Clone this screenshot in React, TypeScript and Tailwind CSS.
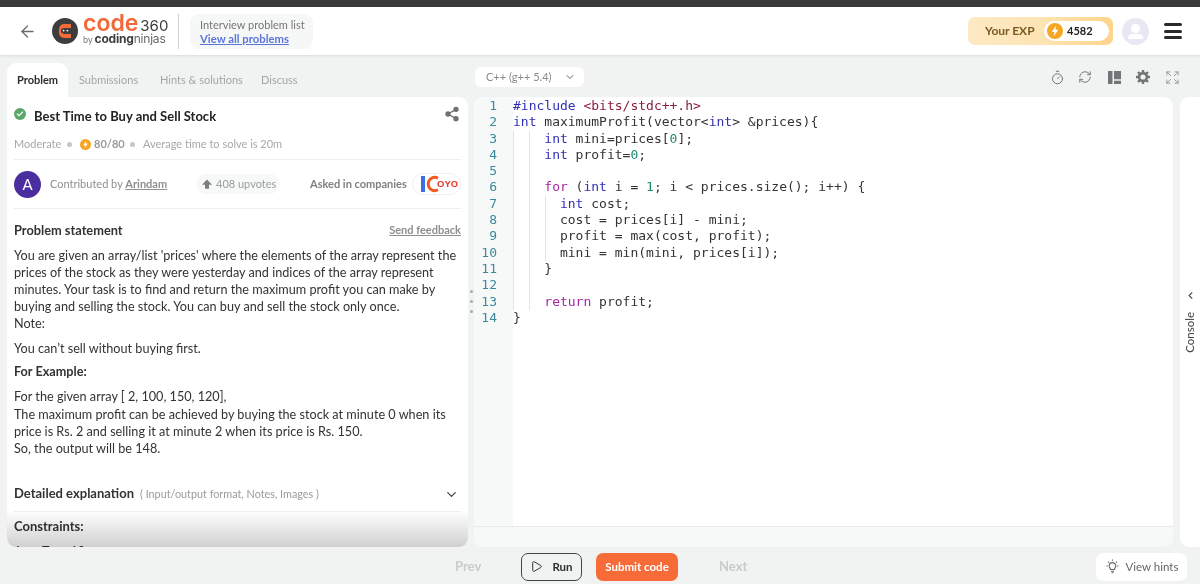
import React from "react";
import { ArrowLeft, ChevronDown, ChevronLeft, Timer, RefreshCw, Expand, Play, Share2, Check } from "lucide-react";

const Bolt = ({ size, bg = "#f5a623" }: { size: number; bg?: string }) => (
  <svg width={size} height={size} viewBox="0 0 24 24" className="shrink-0">
    <circle cx="12" cy="12" r="12" fill={bg} />
    <path d="M13.5 4 7 13.5h4.2L10 20l7-10h-4.4z" fill="#fff" />
  </svg>
);

const K = ({ c, children }: { c: string; children: React.ReactNode }) => <span className={c}>{children}</span>;
const kw = "text-[#2f2fb5]";
const pur = "text-[#a626a4]";
const num = "text-[#1f8a70]";
const str = "text-[#8a1f3c]";

const code: React.ReactNode[] = [
  <><K c={kw}>#include</K> <K c={str}>&lt;bits/stdc++.h&gt;</K></>,
  <><K c={kw}>int</K> maximumProfit(vector&lt;<K c={kw}>int</K>&gt; &amp;prices){"{"}</>,
  <>{"    "}<K c={kw}>int</K> mini=prices[<K c={num}>0</K>];</>,
  <>{"    "}<K c={kw}>int</K> profit=<K c={num}>0</K>;</>,
  <></>,
  <>{"    "}<K c={pur}>for</K> (<K c={kw}>int</K> i = <K c={num}>1</K>; i &lt; prices.size(); i++) {"{"}</>,
  <>{"      "}<K c={kw}>int</K> cost;</>,
  <>{"      "}cost = prices[i] - mini;</>,
  <>{"      "}profit = max(cost, profit);</>,
  <>{"      "}mini = min(mini, prices[i]);</>,
  <>{"    }"}</>,
  <></>,
  <>{"    "}<K c={pur}>return</K> profit;</>,
  <>{"}"}</>,
];

const Dot = () => <span className="block w-[5px] h-[5px] rounded-full bg-[#c4c6c8] shrink-0" />;

export default function App() {
  return (
    <div className="w-[1200px] h-[584px] overflow-hidden flex flex-col bg-[#f1f3f3] text-[#2d2d2d] font-['Lato','Liberation_Sans',sans-serif]">
      <div className="h-[7px] shrink-0 bg-[#3a3a3a]" />
      <header className="relative h-[48px] shrink-0 bg-white flex items-center shadow-[0_1px_3px_rgba(0,0,0,0.10)]">
        <ArrowLeft className="ml-[18px] shrink-0 text-[#6b6b6b]" size={19} strokeWidth={1.6} />
        <svg width="26" height="26" viewBox="0 0 26 26" className="ml-[15px] shrink-0">
          <circle cx="13" cy="13" r="13" fill="#3d3d3d" />
          <path d="M7 11a5 5 0 0 1 5-5h7v4h-7a1 1 0 0 0-1 1v4a1 1 0 0 0 1 1h7v4h-7a5 5 0 0 1-5-5z" fill="#f26b38" />
          <rect x="9" y="10.5" width="9" height="4.5" rx="1.5" fill="#3d3d3d" />
          <circle cx="11.6" cy="12.6" r="0.9" fill="#fff" />
          <circle cx="15.4" cy="12.6" r="0.9" fill="#fff" />
        </svg>
        <div className="ml-[5px] w-[88px] shrink-0 flex flex-col -mt-[3px]">
          <div className="flex items-baseline h-[19px] leading-[19px] whitespace-nowrap">
            <span className="text-[23px] font-semibold text-[#f2693a] font-['Inter',sans-serif]">code</span>
            <span className="ml-[2px] text-[15px] text-[#3d3d3d] font-['Inter',sans-serif]">360</span>
          </div>
          <div className="flex items-baseline h-[12px] leading-[12px] whitespace-nowrap">
            <span className="text-[9px] text-[#777]">by</span>
            <span className="ml-[2px] text-[12px] font-bold text-[#3d3d3d] font-['Inter',sans-serif] tracking-[-0.2px]">coding</span>
            <span className="text-[12px] text-[#666] font-['Inter',sans-serif] tracking-[-0.2px]">ninjas</span>
          </div>
        </div>
        <div className="ml-[7px] w-[1px] h-[35px] bg-[#cfcfcf] shrink-0" />
        <div className="ml-[11px] w-[123px] h-[35px] rounded-[9px] bg-[#f6f7f7] pl-[10px] pt-[4px] leading-[14px] whitespace-nowrap shrink-0">
          <div className="text-[11px] text-[#777]">Interview problem list</div>
          <div className="text-[11.3px] font-bold text-[#5b76d9] underline">View all problems</div>
        </div>
        <div className="ml-auto w-[145px] h-[28px] shrink-0 rounded-[7px] bg-gradient-to-r from-[#fde9c4] via-[#fde4b4] to-[#fdd48c] flex items-center pl-[17px] whitespace-nowrap">
          <span className="text-[12px] font-bold text-[#7a5a22] w-[44px]">Your EXP</span>
          <div className="ml-[15px] w-[65px] h-[20px] shrink-0 rounded-[10px] bg-white flex items-center pl-[3px]">
            <Bolt size={16} />
            <span className="ml-[4px] text-[11px] font-bold text-[#222]">4582</span>
          </div>
        </div>
        <div className="ml-[9px] w-[27px] h-[27px] rounded-full bg-[#e7e8f2] flex flex-col items-center justify-center shrink-0">
          <div className="w-[9px] h-[9px] rounded-full bg-white" />
          <div className="mt-[1px] w-[15px] h-[5px] rounded-t-[4px] bg-white" />
        </div>
        <div className="ml-[15px] mr-[18px] w-[18px] flex flex-col gap-[3.5px] shrink-0">
          <div className="h-[3px] rounded bg-[#2a2a2a]" />
          <div className="h-[3px] rounded bg-[#2a2a2a]" />
          <div className="h-[3px] rounded bg-[#2a2a2a]" />
        </div>
      </header>

      <main className="flex-1 min-h-0 flex">
        <section className="w-[461px] ml-[7px] shrink-0 flex flex-col">
          <nav className="mt-[8px] h-[34px] shrink-0 flex items-center text-[11px] whitespace-nowrap text-[#a3a5a7]">
            <div className="w-[61px] h-full rounded-t-[9px] bg-white flex items-center justify-center font-bold text-[#2d2d2d]">Problem</div>
            <span className="ml-[11px] w-[59px]">Submissions</span>
            <span className="ml-[22px] w-[80px]">Hints &amp; solutions</span>
            <span className="ml-[21px]">Discuss</span>
          </nav>
          <article className="relative flex-1 min-h-0 overflow-hidden bg-white rounded-b-[9px] rounded-tr-[9px] px-[7px]">
            <div className="h-[37px] flex items-center relative">
              <div className="w-[12px] h-[12px] rounded-full bg-[#5ba66b] flex items-center justify-center -mt-[4px] shrink-0">
                <Check size={8} strokeWidth={3.5} className="text-white" />
              </div>
              <h1 className="ml-[8px] mt-[2px] text-[13px] font-bold text-[#222]">Best Time to Buy and Sell Stock</h1>
              <Share2 size={16} className="ml-auto mr-[1px] -mt-[4px] text-[#6f6f6f] fill-[#6f6f6f]" />
            </div>
            <div className="h-[22px] flex items-center text-[11px] text-[#a6a8aa] whitespace-nowrap -mt-[1px]">
              <span className="w-[46px]">Moderate</span>
              <span className="ml-[7px]"><Dot /></span>
              <span className="ml-[8px]"><Bolt size={11} /></span>
              <span className="ml-[3px] font-bold text-[#9a9a9a] w-[28px]">80/80</span>
              <span className="ml-[8px]"><Dot /></span>
              <span className="ml-[8px]">Average time to solve is 20m</span>
            </div>
            <div className="mt-[4px] border-t border-[#eeeeee] h-[50px] border-b flex items-center whitespace-nowrap text-[11px]">
              <div className="w-[27px] h-[27px] shrink-0 rounded-full bg-[#4a2ea0] text-white text-[15px] flex items-center justify-center">A</div>
              <span className="ml-[9px] w-[117px] text-[#8f8f8f]">Contributed by <span className="font-bold underline">Arindam</span></span>
              <div className="ml-[29px] w-[84px] h-[20px] shrink-0 rounded-[10px] bg-[#f7f8f8] flex items-center pl-[5px] text-[#9d9d9d]">
                <svg width="12" height="12" viewBox="0 0 12 12" className="shrink-0"><path d="M6 1.5 11 6.8H8v4H4v-4H1z" fill="#7f7f7f" /></svg>
                <span className="ml-[3px]">408 upvotes</span>
              </div>
              <span className="ml-[30px] w-[97px] font-bold text-[#808080]">Asked in companies</span>
              <div className="ml-[5px] w-[49px] h-[22px] shrink-0 rounded-[11px] border border-[#eeeeee] flex items-center overflow-hidden pl-[8px]">
                <span className="w-[4px] h-[16px] bg-[#3d6fe3] shrink-0" />
                <svg width="14" height="18" viewBox="0 0 14 18" className="ml-[1px] shrink-0"><path d="M12 3.2A6.6 6.6 0 1 0 12 14.8" fill="none" stroke="#f25a22" strokeWidth="3" /></svg>
                <span className="-ml-[3px] text-[9.5px] font-black text-[#e6332a] font-['Liberation_Sans',sans-serif]">OYO</span>
              </div>
            </div>
            <div className="h-[44px] flex items-center justify-between -mt-[1px] pt-[1px]">
              <span className="text-[12.8px] font-bold text-[#333]">Problem statement</span>
              <span className="text-[11px] font-bold text-[#8f8f8f] underline">Send feedback</span>
            </div>
            <div className="text-[12.66px] leading-[16.9px] text-[#333] whitespace-nowrap -mt-[4px]">
              <p>You are given an array/list 'prices' where the elements of the array represent the<br />prices of the stock as they were yesterday and indices of the array represent<br />minutes. Your task is to find and return the maximum profit you can make by<br />buying and selling the stock. You can buy and sell the stock only once.<br />Note:</p>
              <p className="mt-[8px]">You can’t sell without buying first.</p>
              <p className="mt-[7px] font-bold">For Example:</p>
              <p className="mt-[7px] leading-[17.3px]">For the given array [ 2, 100, 150, 120],<br />The maximum profit can be achieved by buying the stock at minute 0 when its<br />price is Rs. 2 and selling it at minute 2 when its price is Rs. 150.<br />So, the output will be 148.</p>
            </div>
            <div className="mt-[20px] h-[34px] border-b border-[#eeeeee] flex items-center whitespace-nowrap">
              <span className="text-[13px] font-bold text-[#333]">Detailed explanation</span>
              <span className="ml-[6px] text-[10.8px] text-[#9a9a9a]">( Input/output format, Notes, Images )</span>
              <ChevronDown size={15} className="ml-auto mr-[2px] text-[#444]" />
            </div>
            <div className="mt-[6px] text-[13px] font-bold text-[#333] leading-[17px]">Constraints:</div>
            <div className="mt-[8px] text-[12.66px] text-[#333] leading-[17px] whitespace-nowrap">1 &lt;= T &lt;= 10</div>
            <div className="absolute left-0 right-0 bottom-0 h-[36px] mix-blend-multiply bg-gradient-to-b from-white to-[#d0d0d0]" />
          </article>
        </section>

        <div className="w-[6px] shrink-0 flex flex-col items-center justify-center gap-[7px]">
          <span className="w-[3px] h-[3px] rounded-full bg-[#a8aaab]" />
          <span className="w-[3px] h-[3px] rounded-full bg-[#a8aaab]" />
          <span className="w-[3px] h-[3px] rounded-full bg-[#a8aaab]" />
        </div>

        <section className="w-[699px] shrink-0 flex flex-col">
          <div className="h-[42px] shrink-0 flex items-center">
            <div className="mt-[2px] ml-[1px] w-[109px] h-[20px] rounded-[6px] bg-white flex items-center pl-[11px] text-[11px] text-[#8a8a8a] whitespace-nowrap">
              <span className="w-[65px]">C++ (g++ 5.4)</span>
              <ChevronDown size={12} className="ml-[13px] text-[#666]" />
            </div>
            <div className="ml-auto mr-[-7px] mt-[2px] flex items-center text-[#727476]">
              <Timer size={15} strokeWidth={1.6} />
              <RefreshCw size={14} strokeWidth={1.6} className="ml-[13px]" />
              <svg width="13" height="13" viewBox="0 0 13 13" className="ml-[16px]"><path d="M0 0h4.5v13H0zM6 0h7v8.2H6zM6 9.8h7V13H6z" fill="currentColor" /></svg>
              <svg width="14" height="14" viewBox="0 0 14 14" className="ml-[15px]">
                <circle cx="7" cy="7" r="3.9" fill="none" stroke="currentColor" strokeWidth="2.6" />
                <g stroke="currentColor" strokeWidth="2.4">
                  <path d="M7 0v3M7 11v3M0 7h3M11 7h3M2 2l2.2 2.2M9.8 9.8 12 12M12 2 9.8 4.2M4.2 9.8 2 12" />
                </g>
              </svg>
              <Expand size={15} strokeWidth={1.4} className="ml-[15px] text-[#8f9193]" />
            </div>
          </div>
          <div className="flex-1 min-h-0 bg-white rounded-[9px] overflow-hidden flex flex-col">
            <div className="flex-1 min-h-0 flex">
              <div className="w-[39px] shrink-0 bg-[#f7f8f8] pt-[1px] pr-[16px] text-right font-['DejaVu_Sans_Mono',monospace] text-[13px] leading-[16.3px] text-[#3a8a9c]">
                {code.map((_, i) => <div key={i} className="h-[16.3px]">{i + 1}</div>)}
              </div>
              <pre className="relative flex-1 pt-[1px] font-['DejaVu_Sans_Mono',monospace] text-[13px] leading-[16.3px] text-[#333]">
                {code.map((l, i) => <div key={i} className="h-[16.3px]">{l}</div>)}
                <span className="absolute left-[0px] top-[33.6px] w-[1px] h-[179.3px] bg-[#e4e4e4]" />
                <span className="absolute left-[15.5px] top-[33.6px] w-[1px] h-[179.3px] bg-[#e4e4e4]" />
                <span className="absolute left-[31.5px] top-[98.8px] w-[1px] h-[65.2px] bg-[#e4e4e4]" />
              </pre>
            </div>
            <div className="h-[21px] shrink-0 border-t border-[#e8e9e9] bg-[#f7f8f8]" />
          </div>
        </section>

        <aside className="ml-[7px] mt-[42px] flex-1 bg-white rounded-l-[9px] flex flex-col items-center pt-[193px]">
          <ChevronLeft size={11} strokeWidth={2.5} className="text-[#555]" />
          <span className="mt-[11px] text-[11.5px] text-[#444] [writing-mode:vertical-rl] rotate-180">Console</span>
        </aside>
      </main>

      <footer className="h-[37px] shrink-0 flex items-center pt-[2px] text-[13px]">
        <span className="ml-[455px] w-[25px] font-bold text-[#c8cacb] whitespace-nowrap">Prev</span>
        <button className="ml-[41px] w-[61px] h-[28px] rounded-[7px] border border-[#444] flex items-center justify-center text-[11.5px] font-bold text-[#2d2d2d]">
          <Play size={13} strokeWidth={1.8} className="mr-[9px]" />Run
        </button>
        <button className="ml-[14px] w-[82px] h-[28px] rounded-[7px] bg-[#f66b38] text-white text-[11.5px] font-bold whitespace-nowrap">Submit code</button>
        <span className="ml-[41px] font-bold text-[#c8cacb]">Next</span>
        <button className="ml-auto mr-[13px] w-[91px] h-[28px] rounded-[7px] bg-white flex items-center justify-center text-[11.5px] text-[#666] whitespace-nowrap">
          <svg width="15" height="15" viewBox="0 0 15 15" className="mr-[6px] shrink-0" fill="none" stroke="#666" strokeWidth="1.1">
            <path d="M5.5 10.5c0-1.4-1.3-1.9-1.3-3.6a3.3 3.3 0 0 1 6.6 0c0 1.7-1.3 2.2-1.3 3.6z" />
            <path d="M6 12.2h3M6.6 13.8h1.8M7.5 0.5v1.3M1.5 7h1.3M12.2 7h1.3M3 2.6l.9.9M12 2.6l-.9.9" />
          </svg>
          View hints
        </button>
      </footer>
    </div>
  );
}
